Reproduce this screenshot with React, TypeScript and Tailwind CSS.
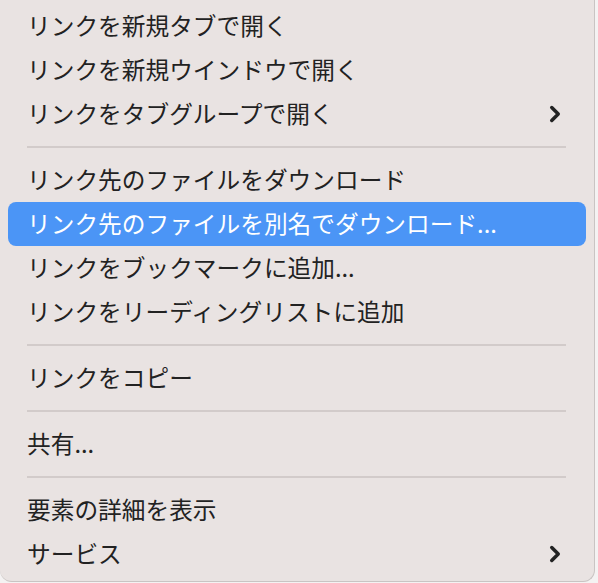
import { ChevronRight } from 'lucide-react';

type Entry = { label: string; sub?: boolean; active?: boolean } | 'sep';

const entries: Entry[] = [
  { label: 'リンクを新規タブで開く' },
  { label: 'リンクを新規ウインドウで開く' },
  { label: 'リンクをタブグループで開く', sub: true },
  'sep',
  { label: 'リンク先のファイルをダウンロード' },
  { label: 'リンク先のファイルを別名でダウンロード...', active: true },
  { label: 'リンクをブックマークに追加...' },
  { label: 'リンクをリーディングリストに追加' },
  'sep',
  { label: 'リンクをコピー' },
  'sep',
  { label: '共有...' },
  'sep',
  { label: '要素の詳細を表示' },
  { label: 'サービス', sub: true },
];

export default function App() {
  return (
    <div className="w-[598px] h-[583px] bg-[#f4f2f2] overflow-hidden">
      <div
        className="w-[595px] h-[582px] bg-[#e9e3e2] border-r border-b border-[#c9c4c3] rounded-b-[12px] pt-[4px] text-[#222]"
        style={{ fontFamily: '"Noto Sans CJK JP", "Noto Sans", sans-serif' }}
      >
        {entries.map((e, i) =>
          e === 'sep' ? (
            <div key={i} className="h-[22px] flex items-center pl-[27px] pr-[28px]">
              <div className="h-[2px] w-full bg-[#d2cbca]" />
            </div>
          ) : (
            <div
              key={i}
              className={`h-[44px] mx-[8px] pl-[19px] pr-[20px] flex items-center justify-between rounded-[8px] text-[23.7px] leading-none ${
                e.active ? 'bg-[#4b95f6] text-white' : ''
              }`}
            >
              <span className="-mt-[1px]">{e.label}</span>
              {e.sub && <ChevronRight className="w-[26px] h-[26px] mr-[-2px]" strokeWidth={3.2} />}
            </div>
          )
        )}
      </div>
    </div>
  );
}
